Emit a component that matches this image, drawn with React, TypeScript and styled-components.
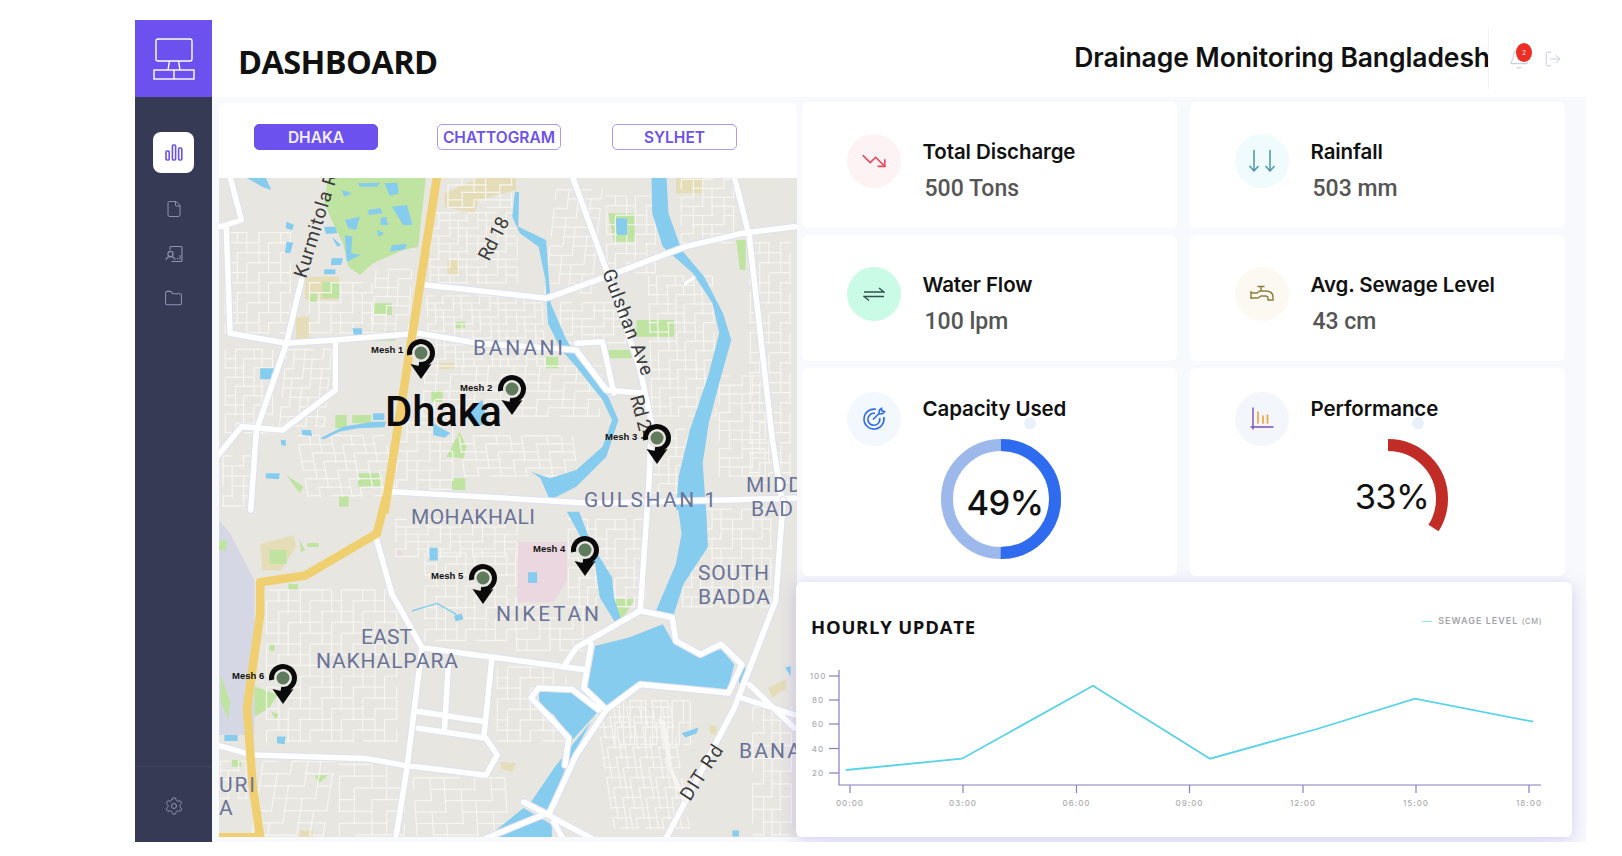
import React from "react";
import styled, { createGlobalStyle } from "styled-components";
import { Bell, File, Folder, LogOut, Settings, TrendingDown } from "lucide-react";

const GlobalStyle = createGlobalStyle`
  html, body {
    margin: 0;
    padding: 0;
    background: #ffffff;
  }
  body {
    font-family: "Inter", "Liberation Sans", sans-serif;
    color: #111111;
  }
`;

const Frame = styled.div`
  display: flex;
  width: 1451px;
  height: 822px;
  margin: 20px 0 0 135px;
`;

const Sidebar = styled.aside`
  display: flex;
  flex-direction: column;
  flex: 0 0 77px;
  background: #373a54;
`;

const LogoBlock = styled.div`
  display: flex;
  align-items: center;
  justify-content: center;
  height: 77px;
  background: #6d51ee;
`;

const Nav = styled.nav`
  display: flex;
  flex-direction: column;
  align-items: center;
  padding-top: 35px;
`;

const ActiveTile = styled.div`
  display: flex;
  align-items: center;
  justify-content: center;
  width: 41px;
  height: 41px;
  margin-bottom: 13px;
  border-radius: 8px;
  background: #ffffff;
`;

const NavItem = styled.div`
  display: flex;
  align-items: center;
  justify-content: center;
  height: 45px;
  color: #8f94b5;
`;

const SidebarFoot = styled.div`
  display: flex;
  align-items: center;
  justify-content: center;
  height: 76px;
  padding-top: 3px;
  box-sizing: border-box;
  margin-top: auto;
  border-top: 1px solid #43465f;
  color: #9094b4;
`;

const Main = styled.main`
  display: flex;
  flex-direction: column;
  flex: 1;
  background: #f8f9fc;
`;

const Header = styled.header`
  display: flex;
  align-items: center;
  height: 77px;
  padding: 0 24px 0 26px;
  background: #ffffff;
`;

const PageTitle = styled.h1`
  flex: 1;
  margin: 5px 0 0;
  font-family: "Open Sans", sans-serif;
  font-size: 32.5px;
  font-weight: 700;
  letter-spacing: -0.6px;
`;

const Org = styled.h2`
  margin: 0 -2px 3px 0;
  font-size: 26.5px;
  font-weight: 600;
  letter-spacing: -0.1px;
`;

const HeaderActions = styled.div`
  display: flex;
  align-items: center;
  gap: 14px;
  height: 61px;
  padding-left: 19px;
  border-left: 1px solid #f3f4f8;
  color: #c9cedd;
`;

const BellWrap = styled.div`
  position: relative;
  display: flex;
`;

const BellBadge = styled.span`
  position: absolute;
  top: -5px;
  right: -2px;
  width: 16px;
  height: 19px;
  border-radius: 50%;
  background: #ee2e24;
  color: #ffffff;
  font-size: 6px;
  line-height: 19px;
  text-align: center;
`;

const Content = styled.div`
  display: flex;
  padding: 5px 0 0 7px;
`;

const MapPanel = styled.section`
  flex: 0 0 578px;
  margin-top: 1px;
`;

const Tabs = styled.div`
  display: flex;
  height: 75px;
  padding: 21px 0 0 35px;
  box-sizing: border-box;
  border-radius: 6px 6px 0 0;
  background: #ffffff;
`;

const Tab = styled.button<{ $active?: boolean; $after: number }>`
  width: 124px;
  height: 26px;
  margin-right: ${(p) => p.$after}px;
  padding: 0;
  border: 1.5px solid ${(p) => (p.$active ? "#6d51ee" : "#a99bf2")};
  border-radius: 5px;
  background: ${(p) => (p.$active ? "#6d51ee" : "#ffffff")};
  color: ${(p) => (p.$active ? "#f2f0ff" : "#6d51ee")};
  font-family: "Inter", sans-serif;
  font-size: 15.5px;
  font-weight: 600;

  &:last-child {
    width: 125px;
  }
`;

const MapCanvas = styled.svg`
  display: block;
  width: 578px;
  height: 659px;
  background: #e8e6e1;

  path,
  polyline {
    vector-effect: non-scaling-stroke;
    fill: none;
    stroke-linejoin: round;
    stroke-linecap: round;
  }
  path.water {
    fill: #86ccee;
  }
  path.green {
    fill: #bfe3a0;
  }
  path.tan {
    fill: #e4ddb8;
  }
  path.pink {
    fill: #ebd7df;
  }
  path.haze {
    fill: #d5d8e4;
  }
  path.pin {
    fill: #0a0a0a;
  }
  path.street {
    stroke: #f6f5f2;
    stroke-width: 1.2;
  }
  path.casing {
    stroke: #dde1f2;
    stroke-width: 7.5;
  }
  path.road {
    stroke: #ffffff;
    stroke-width: 5.5;
  }
  path.highway {
    stroke: #efcf70;
    stroke-width: 8.5;
    stroke-linecap: butt;
  }
`;

const AreaLabel = styled.text`
  fill: #6b7398;
  font-family: "Roboto", sans-serif;
  font-size: 21px;
`;

const RoadLabel = styled.text`
  fill: #3a3a3a;
  font-family: "Roboto", sans-serif;
  font-size: 19px;
`;

const CityLabel = styled.text`
  fill: #0b0b0b;
  font-family: "Roboto", sans-serif;
  font-size: 42px;
  font-weight: 500;
`;

const PinLabel = styled.text`
  fill: #111111;
  font-family: "Liberation Sans", sans-serif;
  font-size: 9.5px;
  font-weight: 700;
`;

const Metrics = styled.section`
  display: grid;
  grid-template-columns: 375px 375px;
  grid-template-rows: 126px 126px 208px 254px;
  column-gap: 13px;
  row-gap: 7px;
  margin-left: 5px;
`;

const Card = styled.article<{ $gauge?: boolean }>`
  position: relative;
  display: flex;
  gap: 22px;
  padding: ${(p) => (p.$gauge ? "24px" : "32px")} 0 0 45px;
  box-sizing: border-box;
  border-radius: 6px;
  background: #ffffff;
`;

const IconCircle = styled.div<{ $bg: string }>`
  display: flex;
  flex: 0 0 54px;
  align-items: center;
  justify-content: center;
  height: 54px;
  border-radius: 50%;
  background: ${(p) => p.$bg};
`;

const CardBody = styled.div<{ $gauge?: boolean }>`
  margin-top: ${(p) => (p.$gauge ? 5 : 6)}px;
`;

const CardTitle = styled.div`
  margin-left: -0.5px;
  font-size: 20.5px;
  font-weight: 600;
  line-height: 24px;
  letter-spacing: -0.1px;
`;

const CardValue = styled.div`
  margin: 12px 0 0 1.5px;
  color: #555555;
  font-family: "Roboto", sans-serif;
  font-size: 23px;
  font-weight: 500;
  line-height: 26px;
`;

const Gauge = styled.div<{ $indent: number }>`
  display: grid;
  place-items: center;
  width: 120px;
  height: 120px;
  margin: 18px 0 0 ${(p) => p.$indent}px;

  > * {
    grid-area: 1 / 1;
  }
`;

const GaugeValue = styled.span<{ $weight: number; $dy: number }>`
  font-family: "Inter", sans-serif;
  font-size: 34.5px;
  font-weight: ${(p) => p.$weight};
  letter-spacing: -0.6px;
  transform: translate(4px, ${(p) => p.$dy}px);
`;

const GlowDot = styled.span`
  position: absolute;
  top: 49px;
  left: 222px;
  width: 12px;
  height: 12px;
  border-radius: 50%;
  background: #e9f1fb;
`;

const ChartCard = styled.section`
  display: flex;
  flex-direction: column;
  grid-column: 1 / -1;
  margin: -1px -7px 0 -6px;
  border-radius: 6px;
  background: #ffffff;
  box-shadow: 0 3px 18px rgba(110, 95, 215, 0.28);
`;

const ChartHead = styled.div`
  display: flex;
  align-items: flex-start;
  justify-content: space-between;
  height: 79px;
  padding: 34px 30px 0 15px;
  box-sizing: border-box;
`;

const ChartTitle = styled.h3`
  margin: 0;
  font-family: "Open Sans", sans-serif;
  font-size: 18.5px;
  font-weight: 700;
  line-height: 22px;
  letter-spacing: 0.75px;
`;

const Legend = styled.div`
  display: flex;
  align-items: center;
  gap: 6px;
  margin-top: -1px;
  color: #a3a3a7;
  font-size: 9px;
  font-weight: 600;
  line-height: 12px;
  letter-spacing: 1px;
`;

const LegendDash = styled.span`
  width: 10px;
  height: 1.5px;
  background: #93e3f1;
`;

const LegendUnit = styled.span`
  font-size: 7.5px;
  font-weight: 500;
  letter-spacing: 0.6px;
`;

const ChartCanvas = styled.svg`
  display: block;
  width: 776px;
  height: 175px;

  text {
    fill: #ababb0;
    font-family: "Inter", sans-serif;
    font-size: 8px;
    font-weight: 500;
    letter-spacing: 1px;
    text-anchor: middle;
  }
`;

// ---- icons ----

const LogoIcon = () => (
  <svg width="42" height="42" viewBox="0 0 42 42" fill="none" stroke="#fff" strokeWidth="1.4">
    <rect x="3" y="1" width="36" height="22" rx="2" />
    <path d="M16.5 23 15 32M25.5 23l1.5 9" />
    <rect x="1" y="32" width="40" height="9" />
    <path d="M21 32v9" />
  </svg>
);

const BarsIcon = () => (
  <svg width="18" height="17" viewBox="0 0 18 17" fill="none" stroke="#6d51ee" strokeWidth="1.6">
    <rect x="1" y="7" width="3.2" height="9" rx="1" />
    <rect x="7.4" y="1" width="3.2" height="15" rx="1" />
    <rect x="13.6" y="4" width="3.2" height="12" rx="1" />
  </svg>
);

const ReportIcon = () => (
  <svg width="18" height="18" viewBox="0 0 18 18" fill="none" stroke="currentColor" strokeWidth="1.1">
    <path d="M5 5V2.5a1 1 0 0 1 1-1h10a1 1 0 0 1 1 1v13a1 1 0 0 1-1 1H6.5" />
    <circle cx="5.5" cy="9" r="2.6" />
    <path d="M1 15c.3-2.4 2-3.4 4.500-3.400S9.700 12.600 10 15" />
    <path d="M12.500 14.500v-1.500M15 14.500V10" />
  </svg>
);

const FlowIcon = () => (
  <svg width="22" height="14" viewBox="0 0 22 14" fill="none" stroke="#31504a" strokeWidth="1.3">
    <path d="M1 5h20l-5-4" />
    <path d="M21 9.500H1l5 4" />
  </svg>
);

const RainIcon = () => (
  <svg width="28" height="24" viewBox="0 0 28 24" fill="none" stroke="#4c97a8" strokeWidth="1.5">
    <path d="M6 1v21M1.500 17 6 22l4.500-5" />
    <path d="M22 1v21M17.500 17l4.500 5 4.500-5" />
  </svg>
);

const TapIcon = () => (
  <svg width="24" height="18" viewBox="0 0 24 18" fill="none" stroke="#8b7c3c" strokeWidth="1.4">
    <path d="M1 6v8M1 8h6l3-2h5c5 0 8 2 8 6v3h-5v-2c0-1-1-2-3-2h-4l-3 2H1" />
    <path d="M11 6V1.500M7.500 1.500h7" />
  </svg>
);

const TargetIcon = () => (
  <svg width="24" height="24" viewBox="0 0 24 24" fill="none" stroke="#2f6bee" strokeWidth="1.6">
    <path d="M14 2.300A10 10 0 1 0 21.800 10" />
    <path d="M13 6.400A6 6 0 1 0 17.700 11" />
    <path d="M11 12.500 17 6.500M17 6.500l.5-3.500 2-1.500.5 2.500 2.500.5-1.500 2-3.500.500z" />
  </svg>
);

const PerfIcon = () => (
  <svg width="24" height="24" viewBox="0 0 24 24" fill="none" strokeLinecap="round">
    <path d="M3 1v21M1 20h22" stroke="#7b4fb5" strokeWidth="1.4" />
    <path d="M8 5v11M13 9v7M17.500 8v8" stroke="#f0a53c" strokeWidth="1.7" />
  </svg>
);

// ---- map ----

type Block = [number, number, number, number, number, number, number];

// x, y, w, h, columns, rows, slant: one patch of the minor street net
const streetBlocks: Block[] = [
  [30, 190, 170, 300, 6, 10, 0],
  [250, 340, 170, 150, 6, 5, 0],
  [430, 300, 90, 190, 3, 7, 10],
  [570, 130, 230, 210, 9, 9, 0],
  [620, 24, 170, 90, 5, 4, 0],
  [560, 380, 310, 210, 13, 10, -8],
  [560, 590, 470, 150, 14, 6, 10],
  [910, 60, 120, 310, 4, 11, 30],
  [1040, 80, 130, 230, 5, 8, 0],
  [920, 400, 170, 120, 6, 5, 0],
  [1150, 320, 170, 420, 7, 15, -10],
  [1240, 30, 140, 190, 5, 7, 0],
  [1420, 220, 110, 720, 4, 24, 0],
  [1340, 620, 120, 300, 4, 11, 0],
  [30, 540, 120, 250, 5, 9, 0],
  [190, 540, 120, 230, 5, 8, 20],
  [220, 800, 230, 180, 8, 7, -30],
  [20, 860, 80, 150, 3, 5, 0],
  [650, 800, 300, 120, 9, 5, -15],
  [480, 760, 150, 200, 5, 7, 0],
  [1160, 780, 90, 190, 4, 7, 0],
];

const bottomBlocks: Block[] = [
  [140, 270, 340, 450, 12, 14, 0],
  [480, 60, 320, 110, 11, 5, 0],
  [560, 160, 240, 260, 9, 8, 0],
  [800, 320, 180, 130, 6, 4, 0],
  [940, 60, 200, 260, 8, 9, 0],
  [1240, 30, 240, 290, 9, 10, 0],
  [750, 500, 180, 220, 6, 7, 0],
  [530, 830, 240, 170, 6, 5, -10],
  [330, 790, 170, 210, 4, 6, 0],
  [130, 780, 190, 220, 5, 6, 30],
  [1010, 620, 200, 360, 12, 12, -50],
  [1430, 620, 100, 380, 4, 10, 0],
  [1060, 600, 200, 130, 14, 2, 0],
  [15, 780, 70, 110, 3, 4, 0],
];

// leaves out about one street piece in four so the net does not read as a plain grid
const blockPath = ([x, y, w, h, cols, rows, slant]: Block, seed: number) => {
  let d = "";
  const keep = (a: number, b: number) => (a * 7 + b * 13 + seed * 5) % 4 !== 0;
  for (let c = 0; c <= cols; c++) {
    const cx = x + (w * c) / cols + (((c + seed) * 11) % 7) - 3;
    for (let r = 0; r < rows; r++) {
      if (!keep(c, r)) continue;
      const y0 = y + (h * r) / rows;
      const y1 = y + (h * (r + 1)) / rows;
      d += `M${cx - (slant * r) / rows} ${y0}L${cx - (slant * (r + 1)) / rows} ${y1}`;
    }
  }
  for (let r = 0; r <= rows; r++) {
    const ry = y + (h * r) / rows + (((r + seed) * 5) % 5) - 2;
    const off = (slant * r) / rows;
    for (let c = 0; c < cols; c++) {
      if (!keep(r + 3, c + 1)) continue;
      const x0 = x + (w * c) / cols - off;
      const x1 = x + (w * (c + 1)) / cols - off;
      d += `M${x0} ${ry}L${x1} ${ry + slant / 20}`;
    }
  }
  return d;
};

const Roads = ({ d }: { d: string }) => (
  <>
    <path className="casing" d={d} />
    <path className="road" d={d} />
  </>
);

const topMajor =
  "M560 345 880 385 1040 320 1250 230 1400 190 1540 170" +
  "M950 20 1040 300 1130 600 1160 760 1150 1020" +
  "M1380 20 1420 200 1480 800 1510 1020" +
  "M40 20 70 150 15 170M30 170 40 490 190 520 320 510 540 490 700 520 960 540 1040 660 1140 670" +
  "M960 520 1030 515 1060 670" +
  "M230 330 190 520 110 780 95 1020" +
  "M320 520 320 660 180 780 70 770 5 860" +
  "M470 965 1000 1000 1540 985";

const bottomMajor =
  "M1150 0 1130 330 960 440 930 490" +
  "M1130 330 1215 350 1225 420 1290 460 1345 430 1400 490 1365 575 1230 560 1130 550 1040 625 960 760 890 930 720 1008" +
  "M860 560 950 565 1020 625M860 560 840 590 900 660 940 710 930 790" +
  "M1000 430 980 560 1040 625" +
  "M430 120 470 280 550 440 510 800 480 1010" +
  "M550 440 980 505" +
  "M5 730 100 760 400 770 500 790 720 820 750 760 720 710 540 680" +
  "M620 490 610 680M735 480 715 700M540 630 715 660" +
  "M1510 0 1490 300 1380 620 1200 1005" +
  "M1420 550 1540 680M1400 590 1540 640" +
  "M820 900 1000 1008" +
  "M900 960 925 1010";

const pins = [
  { name: "Mesh 1", x: 421, y: 353, lx: 371, ly: 353 },
  { name: "Mesh 2", x: 512, y: 389, lx: 460, ly: 391 },
  { name: "Mesh 3", x: 657, y: 438, lx: 605, ly: 440 },
  { name: "Mesh 4", x: 585, y: 550, lx: 533, ly: 552 },
  { name: "Mesh 5", x: 483, y: 578, lx: 431, ly: 579 },
  { name: "Mesh 6", x: 283, y: 678, lx: 232, ly: 679 },
];

const areaLabels = [
  { t: "BANANI", x: 473, y: 355, w: 90 },
  { t: "GULSHAN 1", x: 584, y: 507, w: 132 },
  { t: "MIDD", x: 746, y: 492, w: 56 },
  { t: "BAD", x: 751, y: 516, w: 42 },
  { t: "MOHAKHALI", x: 411, y: 524, w: 124 },
  { t: "SOUTH", x: 698, y: 580, w: 71 },
  { t: "BADDA", x: 698, y: 604, w: 72 },
  { t: "NIKETAN", x: 496, y: 621, w: 103 },
  { t: "EAST", x: 361, y: 644, w: 51 },
  { t: "NAKHALPARA", x: 316, y: 668, w: 142 },
  { t: "URI", x: 219, y: 792, w: 36 },
  { t: "A", x: 219, y: 815, w: 12 },
  { t: "BANA", x: 739, y: 758, w: 62 },
];

const roadLabels = [
  { t: "Kurmitola R", x: 306, y: 279, r: -73, w: 108 },
  { t: "Rd 18", x: 489, y: 262, r: -63, w: 46 },
  { t: "Gulshan Ave", x: 602, y: 272, r: 69, w: 112 },
  { t: "Rd 24", x: 630, y: 397, r: 75, w: 46 },
  { t: "DIT Rd", x: 690, y: 802, r: -57, w: 62 },
];

const MapView = () => (
  <MapCanvas viewBox="219 178 578 659">
    <g transform="translate(215 170) scale(.3763 .3333)">
      <path className="green" d="M300 24H560L540 230 500 240 420 280 385 315 355 290 340 220 310 150 290 100Z" />
      <path className="tan" d="M610 70 700 24H800V60L700 90 690 130 610 110ZM240 320H330L325 390H240Z" />
      <path className="green" d="M285 335H330V385H285ZM420 400H470V435H420ZM1120 450H1220V500H1120ZM1040 540H1110V565H1040ZM1045 130H1115V215H1060ZM575 660H605V695H575ZM320 735H350V775H320ZM365 735H415V760H365ZM615 860 650 785 668 830 660 865ZM380 910H440V950H380ZM630 925H665V960H630ZM330 975H355V1010H330ZM1385 210H1410V300H1395ZM410 485H480V512H410ZM640 455H665V475H640ZM250 370H270V400H250ZM880 560H912V595H880ZM190 915 235 950 225 970Z" />
      <path className="tan" d="M215 440H250V510H215ZM618 270H650V315H618ZM1225 24H1295V70H1225ZM595 578H635V597H595Z" />
      <path className="street" d={streetBlocks.map(blockPath).join("")} />
      <path
        className="water"
        d="M1160 24H1200L1205 130 1240 240 1300 320 1350 430 1372 510 1340 640 1312 760 1296 880 1305 1020H1225L1232 920 1262 780 1310 620 1340 490 1322 400 1270 310 1190 230 1162 130Z"
      />
      <path
        className="water"
        d="M797 65 808 66 806 170 880 210 892 400 930 500 960 560 1045 680 1072 750 1040 860 960 950 890 990 865 925 840 905 890 925 960 900 1030 830 1055 750 1030 690 960 590 920 540 885 460 878 330 860 230 810 190 790 140Z"
      />
      <path
        className="water"
        d="M85 24H135L150 60 125 50ZM380 40 440 38 430 50 385 50ZM450 40 485 38 488 70 465 78ZM335 60 365 70 345 80ZM405 120 440 115 445 130 410 135ZM345 150 385 140 375 180 355 175ZM440 145 455 140 460 165 440 165ZM470 110 510 105 525 165 500 165ZM430 180 450 190 435 200ZM190 155 210 165 205 180 188 175ZM290 170H320L325 190 295 192ZM190 215 208 218 200 250 186 248ZM310 200 335 225 325 230ZM345 195 365 200 362 250 388 255 350 275ZM470 225 510 222 505 238 465 245ZM310 265H340L335 285H308ZM290 298H320V313H290ZM120 595H158L155 628H120ZM365 475H390L392 510H372ZM135 910H172L170 928 135 925ZM280 805 340 770 420 755H455L450 772 380 775 330 785 290 808ZM420 730H450V750H420ZM230 780H255L258 798 232 795ZM175 810H188L188 828 176 825ZM1065 145H1095V195H1068ZM580 760 625 790 610 803 580 795ZM660 730 710 690 725 760 690 770Z"
      />
      <Roads d={topMajor} />
      <path className="highway" d="M590 20 450 1030" />
      <path className="casing" style={{ strokeWidth: 3 }} d="M1245 340 1275 322" />
      <path className="road" style={{ strokeWidth: 3 }} d="M1250 340 1272 324" />
    </g>
    <g transform="translate(215 500) scale(.3763 .3356)">
      <path className="haze" d="M11 60 40 100 105 240 105 700H11Z" />
      <path className="tan" d="M120 130 210 105 215 140 175 210H125ZM760 780 800 785 790 810 760 800ZM1470 560 1515 535 1520 560 1480 590ZM225 985H260V1008H225ZM1315 670 1335 675 1330 700 1315 695Z" />
      <path className="pink" d="M805 125H935V240L900 305H805ZM478 150H495V168H478Z" />
      <path className="green" d="M145 148H190V190H145ZM225 120 240 150 228 155ZM245 128H275V140H245ZM105 555 165 580 145 620 105 645ZM145 430H158V450H145ZM150 630 170 640 160 655ZM1055 295H1115L1080 360ZM265 820H300L275 845ZM11 120H30V150H11ZM195 250H220V265H195ZM15 520 40 600 35 655 15 600ZM45 775H70V795H45Z" />
      <path className="street" d={bottomBlocks.map(blockPath).join("")} />
      <path
        className="water"
        d="M1230 20H1305L1310 140 1245 250 1218 345 1172 330 1225 190 1240 100ZM935 35H968L1000 130 1055 230 1060 290 1080 360 1062 362 1022 290 1010 190 962 90ZM1010 435 1100 410 1190 370 1220 430 1280 465 1345 445 1380 490 1360 575 1220 555 1130 545 1040 615 990 560ZM860 565 960 572 1018 630 950 715 900 640 862 610ZM960 715 1000 660 930 800 895 930 840 900 900 800ZM720 1008 820 918 895 968 895 1008ZM570 142H592V180H570ZM832 215H856V247H832ZM635 345 655 338 660 355 640 362ZM165 705H188L185 728 165 725ZM25 700H60V718H25ZM1240 695 1285 678 1280 695 1250 708ZM1515 500 1530 495 1530 525ZM1375 985H1392V1003H1375ZM1395 500H1420L1405 545 1392 545Z"
      />
      <path className="water" style={{ fill: "none", stroke: "#86ccee", strokeWidth: 1.5 }} d="M525 330 590 308 640 340" />
      <Roads d={bottomMajor} />
      <path className="street" d="M1190 660 1210 800 1250 900" style={{ strokeWidth: 4 }} />
      <path className="highway" d="M455 -10 430 100 240 225 120 245 120 340 85 620 100 850 120 1005H5" />
    </g>

    {areaLabels.map((l) => (
      <AreaLabel key={l.t} x={l.x} y={l.y} textLength={l.w}>
        {l.t}
      </AreaLabel>
    ))}
    {roadLabels.map((l) => (
      <RoadLabel key={l.t} transform={`translate(${l.x} ${l.y}) rotate(${l.r})`} textLength={l.w}>
        {l.t}
      </RoadLabel>
    ))}
    <CityLabel x={385} y={426} textLength={117}>
      Dhaka
    </CityLabel>

    {pins.map((p) => (
      <g key={p.name}>
        <g transform={`translate(${p.x} ${p.y})`}>
          <circle r="10" fill="#e8e6e1" />
          <circle r="11.500" fill="none" stroke="#0a0a0a" strokeWidth="5" strokeDasharray="58 14" transform="rotate(170)" />
          <path className="pin" d="M-10.500 11 0 26 10.500 11 0 13.500Z" />
          <circle r="6.500" fill="#5f7a5c" />
        </g>
        <PinLabel x={p.lx} y={p.ly}>
          {p.name}
        </PinLabel>
      </g>
    ))}
  </MapCanvas>
);

// ---- cards ----

const Ring = ({ track, color, part }: { track?: string; color: string; part: number }) => {
  const r = 54;
  const c = 2 * Math.PI * r;
  return (
    <svg width="120" height="120" viewBox="0 0 120 120" fill="none">
      {track && <circle cx="60" cy="60" r={r} stroke={track} strokeWidth="12" />}
      <circle
        cx="60"
        cy="60"
        r={r}
        stroke={color}
        strokeWidth="12"
        strokeDasharray={`${c * part} ${c}`}
        transform="rotate(-90 60 60)"
      />
    </svg>
  );
};

const stats = [
  { title: "Total Discharge", value: "500 Tons", bg: "#fdf3f4", icon: <TrendingDown size={26} color="#ee4a5f" strokeWidth={1.5} /> },
  { title: "Rainfall", value: "503 mm", bg: "#effbfd", icon: <RainIcon /> },
  { title: "Water Flow", value: "100 lpm", bg: "#c9fbe6", icon: <FlowIcon /> },
  { title: "Avg. Sewage Level", value: "43 cm", bg: "#fcf9f2", icon: <TapIcon /> },
];

const chartLine = "846,769 962,757.700 1093,684.700 1210,757.700 1317,728 1415,697.700 1533,720.700";
const yTicks = [
  { v: "100", y: 675 },
  { v: "80", y: 699 },
  { v: "60", y: 723 },
  { v: "40", y: 747.500 },
  { v: "20", y: 772 },
];
const xTicks = [
  { v: "00:00", x: 850 },
  { v: "03:00", x: 963 },
  { v: "06:00", x: 1076.500 },
  { v: "09:00", x: 1189.500 },
  { v: "12:00", x: 1303 },
  { v: "15:00", x: 1416 },
  { v: "18:00", x: 1529 },
];

const HourlyChart = () => (
  <ChartCanvas viewBox="796 660 776 175">
    <path d="M839 669V784H1541" fill="none" stroke="#8b7dc0" strokeWidth="1.200" />
    {yTicks.map((t) => (
      <g key={t.v}>
        <path d={`M829 ${t.y}H839`} stroke="#8b7dc0" strokeWidth="1.200" />
        <text x={818} y={t.y + 3}>
          {t.v}
        </text>
      </g>
    ))}
    {xTicks.map((t) => (
      <g key={t.v}>
        <path d={`M${t.x} 784V792`} stroke="#8b7dc0" strokeWidth="1.200" />
        <text x={t.x} y={805}>
          {t.v}
        </text>
      </g>
    ))}
    <polyline points={chartLine} fill="none" stroke="#5ad2e8" strokeWidth="1.800" />
  </ChartCanvas>
);

const App = () => (
  <>
    <GlobalStyle />
    <Frame>
      <Sidebar>
        <LogoBlock>
          <LogoIcon />
        </LogoBlock>
        <Nav>
          <ActiveTile>
            <BarsIcon />
          </ActiveTile>
          <NavItem>
            <File size={18} strokeWidth={1.3} />
          </NavItem>
          <NavItem>
            <ReportIcon />
          </NavItem>
          <NavItem>
            <Folder size={19} strokeWidth={1.3} />
          </NavItem>
        </Nav>
        <SidebarFoot>
          <Settings size={20} strokeWidth={1.2} />
        </SidebarFoot>
      </Sidebar>
      <Main>
        <Header>
          <PageTitle>DASHBOARD</PageTitle>
          <Org>Drainage Monitoring Bangladesh</Org>
          <HeaderActions>
            <BellWrap>
              <Bell size={22} strokeWidth={1.2} />
              <BellBadge>2</BellBadge>
            </BellWrap>
            <LogOut size={18} strokeWidth={1.3} />
          </HeaderActions>
        </Header>
        <Content>
          <MapPanel>
            <Tabs>
              <Tab $active $after={59}>
                DHAKA
              </Tab>
              <Tab $after={51}>CHATTOGRAM</Tab>
              <Tab $after={0}>SYLHET</Tab>
            </Tabs>
            <MapView />
          </MapPanel>
          <Metrics>
            {stats.map((s) => (
              <Card key={s.title}>
                <IconCircle $bg={s.bg}>{s.icon}</IconCircle>
                <CardBody>
                  <CardTitle>{s.title}</CardTitle>
                  <CardValue>{s.value}</CardValue>
                </CardBody>
              </Card>
            ))}
            <Card $gauge>
              <IconCircle $bg="#f3f7fe">
                <TargetIcon />
              </IconCircle>
              <CardBody $gauge>
                <CardTitle>Capacity Used</CardTitle>
                <Gauge $indent={18}>
                  <Ring track="#9db9ec" color="#2f6bee" part={0.5} />
                  <GaugeValue $weight={500} $dy={3}>
                    49%
                  </GaugeValue>
                </Gauge>
              </CardBody>
              <GlowDot />
            </Card>
            <Card $gauge>
              <IconCircle $bg="#f3f7fc">
                <PerfIcon />
              </IconCircle>
              <CardBody $gauge>
                <CardTitle>Performance</CardTitle>
                <Gauge $indent={17}>
                  <Ring color="#c12c27" part={0.34} />
                  <GaugeValue $weight={400} $dy={-3}>
                    33%
                  </GaugeValue>
                </Gauge>
              </CardBody>
              <GlowDot />
            </Card>
            <ChartCard>
              <ChartHead>
                <ChartTitle>HOURLY UPDATE</ChartTitle>
                <Legend>
                  <LegendDash />
                  <span>
                    SEWAGE LEVEL <LegendUnit>(CM)</LegendUnit>
                  </span>
                </Legend>
              </ChartHead>
              <HourlyChart />
            </ChartCard>
          </Metrics>
        </Content>
      </Main>
    </Frame>
  </>
);

export default App;
